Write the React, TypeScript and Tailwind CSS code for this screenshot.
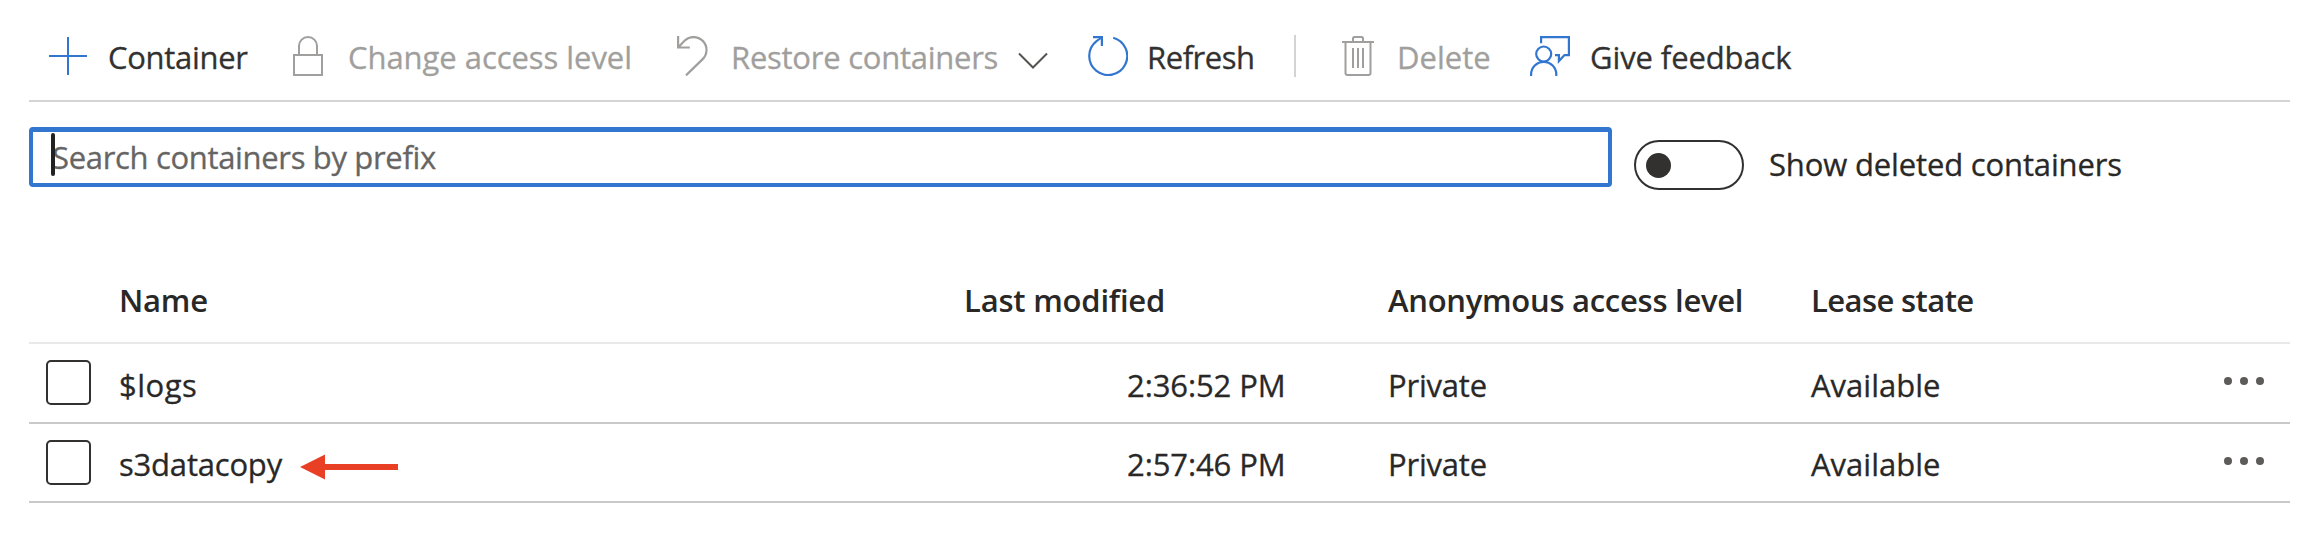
import type { ReactNode } from "react";

function PlusIcon() {
  return (
    <svg width="38" height="38" viewBox="0 0 38 38" fill="none" stroke="#3276cf" strokeWidth="2">
      <path d="M19 0v38M0 19h38" />
    </svg>
  );
}

function LockIcon() {
  return (
    <svg width="30" height="40" viewBox="0 0 30 40" fill="none" stroke="#a19f9d" strokeWidth="2">
      <path d="M1 19h28v20H1zM6 19v-9a9 9 0 0 1 18 0v9" />
    </svg>
  );
}

function RestoreIcon() {
  return (
    <svg width="31" height="40" viewBox="0 0 31 40" fill="none" stroke="#a19f9d" strokeWidth="2.2">
      <path d="M1.1 0v11.5h11.7M1.6 11L7.5 4.8A12.8 12.8 0 0 1 25.7 23.1L9 39.4" />
    </svg>
  );
}

function ChevronIcon() {
  return (
    <svg width="30" height="18" viewBox="0 0 30 18" fill="none" stroke="#55534f" strokeWidth="2">
      <path d="M1 1.5l14 14 14-14" />
    </svg>
  );
}

function RefreshIcon() {
  return (
    <svg width="40" height="40" viewBox="0 0 40 40" fill="none" stroke="#3276cf" strokeWidth="2.2">
      <path d="M25.2 1.7A19 19 0 1 1 8.5 5.1Q11 3.3 14 1.4" />
      <path d="M5 1.1h8.9V10" />
    </svg>
  );
}

function TrashIcon() {
  return (
    <svg width="32" height="40" viewBox="0 0 32 40" fill="none" stroke="#a19f9d" strokeWidth="2">
      <path d="M0 6h32M11 6V2.5Q11 1 12.5 1h7Q21 1 21 2.5V6" />
      <path d="M3.5 6v31q0 2 2 2h21q2 0 2-2V6M11 12v20M16 12v20M21 12v20" />
    </svg>
  );
}

function FeedbackIcon() {
  return (
    <svg width="40" height="40" viewBox="0 0 40 40" fill="none" stroke="#3276cf" strokeWidth="2.2">
      <circle cx="13.7" cy="18" r="7.5" />
      <path d="M1.1 40v-1.6a12.6 12.6 0 0 1 25.2 0V40" />
      <path d="M11.1 7.2V1.1h27.8v18h-4.4l-5.6 6v-6H25" />
    </svg>
  );
}

function Command({ icon, width, slot, muted, children }: {
  icon: ReactNode;
  width: string;
  slot: string;
  muted?: boolean;
  children: ReactNode;
}) {
  return (
    <button className={`flex shrink-0 items-center ${width} ${muted ? "text-[#a19f9d]" : "text-[#323130]"}`}>
      <span className={`flex shrink-0 ${slot}`}>{icon}</span>
      {children}
    </button>
  );
}

const COLS = "grid grid-cols-[89px_845px_424px_423px_1fr] items-center";

const rows = [
  { name: "$logs", nameClass: "tracking-[0.5px]", time: "2:36:52 PM", height: "h-20", box: "-mt-0.5", pad: "pt-1", marked: false },
  { name: "s3datacopy", nameClass: "tracking-[-0.2px]", time: "2:57:46 PM", height: "h-[79px]", box: "", pad: "pt-0.5", marked: true },
];

export default function App() {
  return (
    <main className="h-[556px] w-[2306px] overflow-hidden bg-white pr-4 pl-[29px] font-['Open_Sans','Noto_Sans',sans-serif] text-[31px] leading-[42px] whitespace-nowrap text-[#292827] [-webkit-text-stroke:0.3px]">
      <div className="flex h-[102px] items-center border-b-2 border-[#d4d4d4] pt-3 pl-5">
        <Command icon={<PlusIcon />} width="w-[244px]" slot="w-[59px]">
          <span className="pt-0.5 tracking-[-0.3px]">Container</span>
        </Command>
        <Command icon={<LockIcon />} width="w-[384px]" slot="w-[55px]" muted>
          <span className="pt-0.5 tracking-[-0.05px]">Change access level</span>
        </Command>
        <Command icon={<RestoreIcon />} width="w-[411px]" slot="w-[54px]" muted>
          <span className="w-[287px] pt-0.5 text-left tracking-[-0.25px]">Restore containers</span>
          <span className="pt-2.5"><ChevronIcon /></span>
        </Command>
        <Command icon={<RefreshIcon />} width="w-[206px]" slot="w-[59px]">
          <span className="pt-0.5 tracking-[-0.45px]">Refresh</span>
        </Command>
        <div className="mr-[46px] h-[42px] w-0.5 bg-[#d4d4d4]" />
        <Command icon={<TrashIcon />} width="w-[188px]" slot="w-[55px]" muted>
          <span className="pt-0.5">Delete</span>
        </Command>
        <Command icon={<FeedbackIcon />} width="w-[280px]" slot="w-[60px]">
          <span className="pt-0.5 tracking-[-0.1px]">Give feedback</span>
        </Command>
      </div>

      <div className="mt-[25px] flex h-[63px] items-start">
        <div className="relative flex h-[60px] w-[1583px] items-center rounded-[4px] border-4 border-t-5 border-[#3276cf] pl-[19px] text-[#666564]">
          <span className="absolute top-[1px] left-[18px] h-[43px] w-1 rounded-full bg-[#222]" />
          <span className="pb-px tracking-[-0.33px]">Search containers by prefix</span>
        </div>
        <div className="mt-[13px] ml-[22px] flex h-[50px] w-[110px] items-center rounded-full border-2 border-[#323130] pl-2.5">
          <div className="size-[25px] rounded-full bg-[#323130]" />
        </div>
        <span className="mt-4 ml-[25px] tracking-[-0.15px]">Show deleted containers</span>
      </div>

      <section className="mt-17">
        <div className={`${COLS} h-[86px] border-b-2 border-[#e9e9e9] font-semibold [-webkit-text-stroke:0]`}>
          <span />
          <span className="pl-px tracking-[-0.2px]">Name</span>
          <span className="pl-px tracking-[-0.2px]">Last modified</span>
          <span className="pl-px tracking-[-0.27px]">Anonymous access level</span>
          <span className="pl-px tracking-[-0.6px]">Lease state</span>
        </div>
        {rows.map((row) => (
          <div key={row.name} className={`${COLS} ${row.height} border-b-2 border-[#c9c9c9]`}>
            <div className={`ml-[17px] size-[45px] rounded-[5px] border-2 border-[#323130] ${row.box}`} />
            <div className={`flex items-center pl-px ${row.pad}`}>
              <span className={row.nameClass}>{row.name}</span>
              {row.marked && (
                <svg className="mt-1.5 ml-[18px]" width="98" height="26" viewBox="0 0 98 26" fill="#e94025">
                  <path d="M0 13L25 0.5v9.5h73v6H25v9.5z" />
                </svg>
              )}
            </div>
            <span className={`pl-[164px] tracking-[-0.1px] ${row.pad}`}>{row.time}</span>
            <span className={`pl-px tracking-[-0.2px] ${row.pad}`}>Private</span>
            <div className="flex items-center justify-between pr-[26px] pl-px">
              <span className={row.pad}>Available</span>
              <svg className="-mt-1" width="40" height="8" viewBox="0 0 40 8" fill="#5c5b5a">
                <circle cx="4" cy="4" r="4" />
                <circle cx="20" cy="4" r="4" />
                <circle cx="36" cy="4" r="4" />
              </svg>
            </div>
          </div>
        ))}
      </section>
    </main>
  );
}
